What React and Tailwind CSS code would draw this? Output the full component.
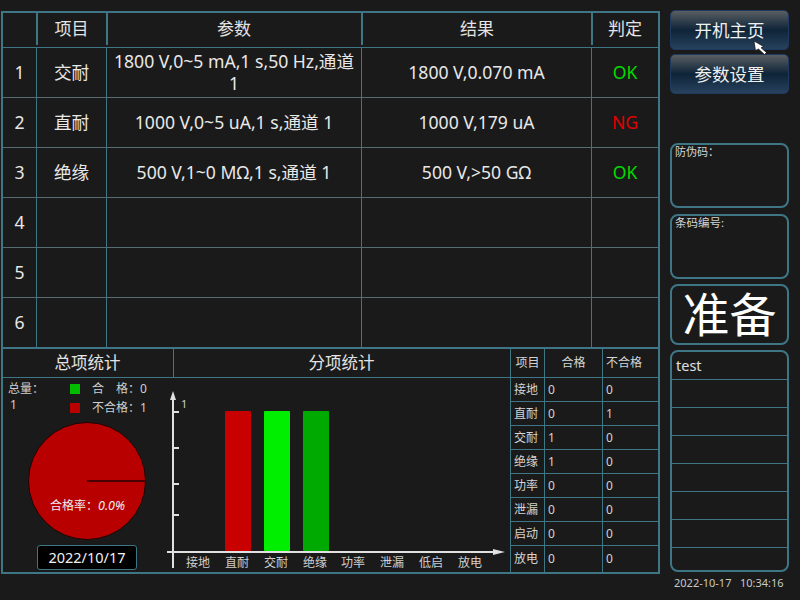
const FONT = '"Noto Sans", "Noto Sans CJK SC", sans-serif';

const rows = [
  { no: "1", item: "交耐", param: "1800 V,0~5 mA,1 s,50 Hz,通道 1", result: "1800 V,0.070 mA", verdict: "OK" },
  { no: "2", item: "直耐", param: "1000 V,0~5 uA,1 s,通道 1", result: "1000 V,179 uA", verdict: "NG" },
  { no: "3", item: "绝缘", param: "500 V,1~0 MΩ,1 s,通道 1", result: "500 V,>50 GΩ", verdict: "OK" },
  { no: "4" },
  { no: "5" },
  { no: "6" },
];

const stats = [
  ["接地", 0, 0],
  ["直耐", 0, 1],
  ["交耐", 1, 0],
  ["绝缘", 1, 0],
  ["功率", 0, 0],
  ["泄漏", 0, 0],
  ["启动", 0, 0],
  ["放电", 0, 0],
];

const COLS = "grid grid-cols-[34px_70px_255px_230px_66px]";
const HEAD_COLS = "grid grid-cols-[35px_70px_255px_230px_65px]";
const cell = "flex items-center justify-center text-center border-[#3f7686]";

function MainTable() {
  return (
    <div className="border-b-2 border-[#3f7686]">
      <div className={`${HEAD_COLS} h-[35px] pb-[2px] text-[17px] text-[#e4e4e4] border-b border-[#3f7686]`}>
        <div className={`${cell} border-r-2`} />
        <div className={`${cell} border-r-2 pr-[1px]`}>项目</div>
        <div className={`${cell} border-r-2 pr-[1px]`}>参数</div>
        <div className={`${cell} border-r-2`}>结果</div>
        <div className={`${cell} pr-[1px]`}>判定</div>
      </div>
      {rows.map((r, i) => (
        <div
          key={r.no}
          className={`${COLS} text-[17.6px] leading-[22px] text-[#e8e8e8] ${i < 5 ? "h-[50px] border-b border-[#566b72]" : "h-[49px]"}`}
        >
          <div className={`${cell} border-r pb-[2px]`}>{r.no}</div>
          <div className={`${cell} border-r pb-[2px]`}>{r.item}</div>
          <div className={`${cell} border-r pb-[2px] px-[3px]`}>{r.param}</div>
          <div className={`${cell} border-r pb-[2px]`}>{r.result}</div>
          <div className={`${cell} pb-[2px] ${r.verdict === "NG" ? "text-[#e00000]" : "text-[#00dc00]"}`}>{r.verdict}</div>
        </div>
      ))}
    </div>
  );
}

function Overview() {
  return (
    <div className="w-[162px] flex flex-col text-[12px] text-[#cfcfcf]">
      <div className="flex h-[43px] leading-[16px]">
        <div className="w-[67px] pl-[5px] pt-[3px]">
          <div>总量：</div>
          <div className="pl-[2px]">1</div>
        </div>
        <div className="flex flex-col gap-[9px] pt-[6px]">
          <div className="flex items-center h-[10px]">
            <span className="w-[10px] h-[10px] bg-[#00bb00] mr-[12px]" />
            <span>合　格：0</span>
          </div>
          <div className="flex items-center h-[10px]">
            <span className="w-[10px] h-[10px] bg-[#bb0000] mr-[12px]" />
            <span>不合格：1</span>
          </div>
        </div>
      </div>
      <div className="relative w-[120px] h-[120px] ml-[24px]">
        <svg width="120" height="120" viewBox="0 0 120 120" className="block">
          <circle cx="60" cy="60" r="58.5" fill="#b80000" stroke="#1c0505" strokeWidth="1" />
          <line x1="60" y1="60" x2="119" y2="60" stroke="#4a0000" strokeWidth="2" />
        </svg>
        <div className="absolute left-[23px] top-[77px] whitespace-nowrap text-[#eeeeee] leading-[16px]">
          合格率：<i className="text-[12.5px]">0.0%</i>
        </div>
      </div>
      <div className="mt-[4px] ml-[34px] w-[100px] h-[25px] flex items-center justify-center bg-black border border-[#3f7686] rounded-[3px] text-[14.5px] text-[#f0f0f0]">
        2022/10/17
      </div>
    </div>
  );
}

function BarChart() {
  const labels = ["接地", "直耐", "交耐", "绝缘", "功率", "泄漏", "低启", "放电"];
  const centers = [33, 72, 111, 150, 188, 227, 266, 305];
  return (
    <svg width="345" height="194" viewBox="0 0 345 194" className="block">
      <line x1="8" y1="20" x2="8" y2="190" stroke="#e0e0e0" strokeWidth="2" />
      <polygon points="8,13 5,22 11,22" fill="#e0e0e0" />
      <line x1="2" y1="174" x2="330" y2="174" stroke="#e0e0e0" strokeWidth="2" />
      <polygon points="340,174 328,171 328,177" fill="#e0e0e0" />
      {[34, 70, 106, 137].map((y) => (
        <line key={y} x1="8" y1={y} x2="14" y2={y} stroke="#e0e0e0" strokeWidth="2" />
      ))}
      <text x="16" y="30" fontSize="11" fill="#cfcfcf" fontFamily={FONT}>1</text>
      <rect x="60" y="33" width="26" height="140" rx="1" fill="#c80000" />
      <rect x="99" y="33" width="26" height="140" rx="1" fill="#00ee00" />
      <rect x="138" y="33" width="26" height="140" rx="1" fill="#00aa00" />
      {labels.map((l, i) => (
        <text key={l} x={centers[i]} y="189" fontSize="12" fill="#d0d0d0" textAnchor="middle" fontFamily={FONT}>
          {l}
        </text>
      ))}
    </svg>
  );
}

function StatTable() {
  return (
    <div className="w-[148px] border-l border-[#3f7686] text-[12px] text-[#d4d4d4]">
      <div className="grid grid-cols-[34px_58px_56px] h-[29px] border-b border-[#3f7686]">
        <div className="flex items-center justify-center border-r border-[#3f7686]">项目</div>
        <div className="flex items-center justify-center border-r border-[#3f7686]">合格</div>
        <div className="flex items-center pl-[3px]">不合格</div>
      </div>
      {stats.map(([name, pass, fail], i) => (
        <div
          key={name}
          className={`grid grid-cols-[34px_58px_56px] ${i < 7 ? "h-[24px] border-b border-[#3f7686]" : "h-[26px]"}`}
        >
          <div className="flex items-center pl-[3px] border-r border-[#3f7686]">{name}</div>
          <div className="flex items-center pl-[3px] border-r border-[#3f7686]">{pass}</div>
          <div className="flex items-center pl-[3px]">{fail}</div>
        </div>
      ))}
    </div>
  );
}

function InfoBox({ label, size }) {
  return (
    <div className={`h-[65px] border-2 border-[#3f7686] rounded-lg px-[3px] leading-[14px] text-[#d4d4d4] ${size}`}>
      {label}
    </div>
  );
}

function NavButton({ children }) {
  return (
    <button className="h-[40px] w-[119px] flex items-center justify-center rounded-[5px] border border-[#1f3a60] bg-gradient-to-b from-[#5a5f62] via-[#0e2438] to-[#28425e] text-[17.5px] text-[#f0f0f0]">
      {children}
    </button>
  );
}

export default function App() {
  return (
    <div className="relative w-[800px] h-[600px] bg-[#1a1a1a] overflow-hidden flex" style={{ fontFamily: FONT }}>
      <div className="ml-[1px] mt-[11px] w-[659px] h-[563px] border-2 border-[#3f7686]">
        <MainTable />
        <div className="flex h-[223px]">
          <div className="w-[507px]">
            <div className="flex h-[29px] border-b border-[#3f7686] text-[16.5px] text-[#e4e4e4]">
              <div className="w-[171px] flex items-center justify-center border-r border-[#3f7686] pr-[1px]">总项统计</div>
              <div className="flex-1 flex items-center justify-center pr-[1px]">分项统计</div>
            </div>
            <div className="flex h-[194px]">
              <Overview />
              <BarChart />
            </div>
          </div>
          <StatTable />
        </div>
      </div>

      <div className="ml-[10px] mt-[10px] w-[120px] flex flex-col">
        <div className="flex flex-col gap-[4px]">
          <NavButton>开机主页</NavButton>
          <NavButton>参数设置</NavButton>
        </div>
        <div className="mt-[49px] w-[119px] flex flex-col gap-[5px]">
          <InfoBox label="防伪码：" size="text-[11px]" />
          <InfoBox label="条码编号:" size="text-[11.5px] mt-[1px]" />
          <div className="h-[61px] border-2 border-[#3f7686] rounded-lg flex items-center justify-center text-[47px] leading-none text-white">
            准备
          </div>
          <div className="h-[222px] border-2 border-[#3f7686] rounded-lg overflow-hidden text-[14.5px] text-[#e0e0e0]">
            <div className="h-[28px] pl-[4px] flex items-center border-b border-[#3f7686]">test</div>
            {[0, 1, 2, 3, 4, 5].map((i) => (
              <div key={i} className="h-[28px] border-b border-[#3f7686]" />
            ))}
          </div>
        </div>
        <div className="mt-[4px] ml-[4px] whitespace-nowrap text-[11px] leading-[14px] text-[#c8c8c8]">
          2022-10-17&nbsp;&nbsp;&nbsp;10:34:16
        </div>
      </div>

      {/* mouse pointer */}
      <svg width="16" height="17" viewBox="0 0 16 17" className="absolute left-[752px] top-[39px]">
        <path d="M2 2 L3.5 11.5 L6.5 10 L12.5 15.5 L14.5 13.5 L9 8.8 L11.5 7.5 Z" fill="#ffffff" stroke="#000000" strokeWidth="0.6" />
      </svg>
    </div>
  );
}
